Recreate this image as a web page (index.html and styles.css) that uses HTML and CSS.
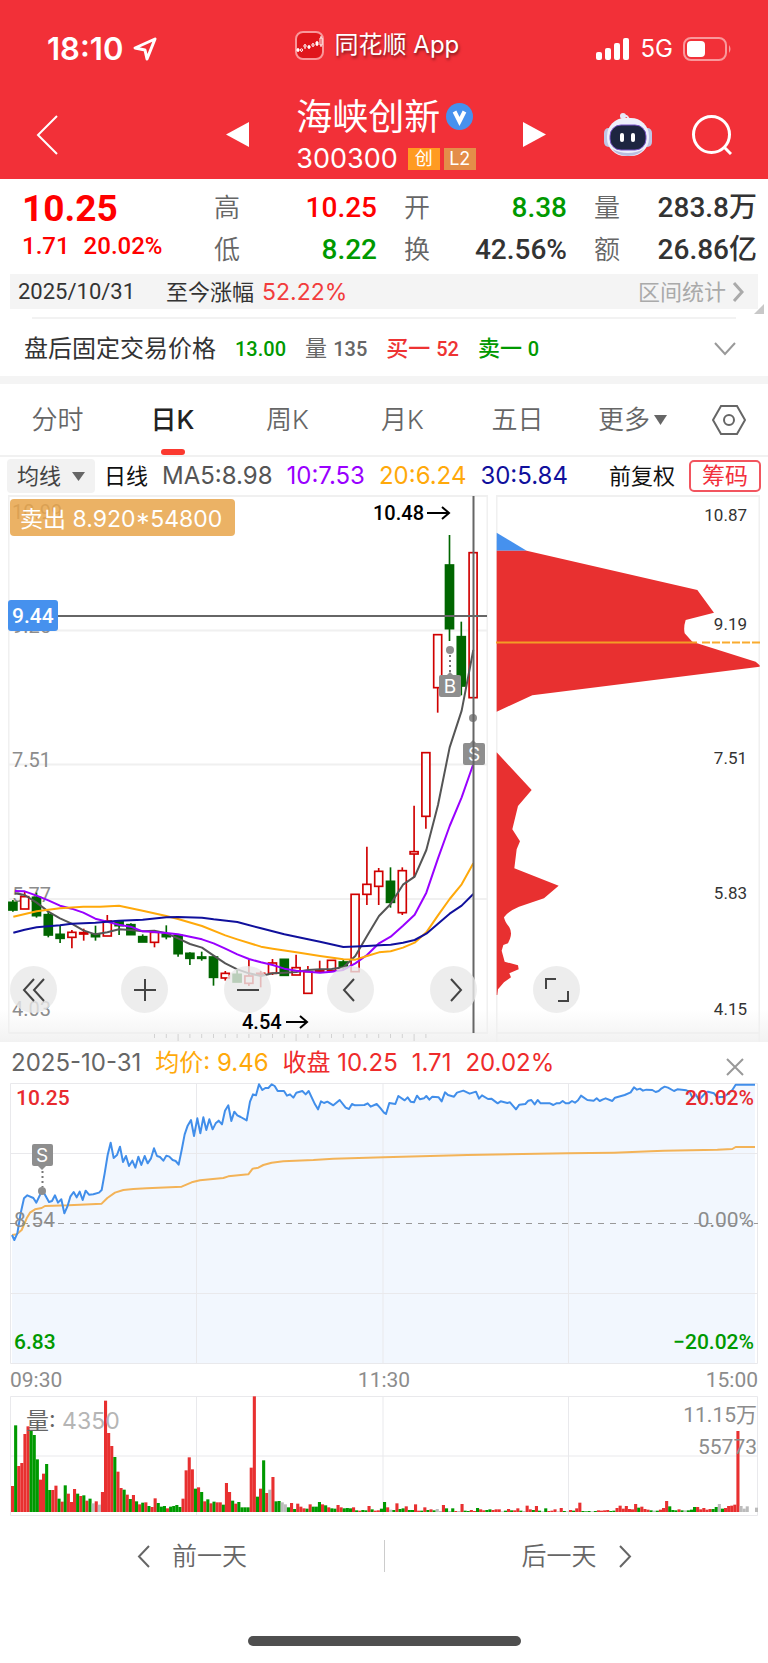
FILE: index.html
```html
<!DOCTYPE html>
<html lang="zh-CN">
<head>
    <meta charset="UTF-8">
    <meta name="viewport" content="width=device-width, initial-scale=1.0">
    <title>海峡创新 300300</title>
    <link rel="stylesheet" href="styles.css">
</head>
<body>
    <header class="top">
        <div class="status-bar">
            <div class="status-left">
                <span class="clock">18:10</span>
                <svg width="24" height="24" viewBox="0 0 24 24" fill="none" stroke="#fff" stroke-width="3" stroke-linejoin="round"><path d="M22 2 2 11l10 2 2 9z"/></svg>
            </div>
            <div class="status-app">
                <svg width="29" height="29" viewBox="0 0 29 29">
                    <rect x="1" y="1" width="27" height="27" rx="7" fill="#e0161c" stroke="#f9979a" stroke-width="2"/>
                    <g stroke="#fff" fill="none"><path d="M3 17v4M6.5 18v3M10 13v5M14 14v4M18 12v4M22 10v5M26 5v11" stroke-width="1"/><path d="M2 18h2v2H2zM13 15h2v2h-2zM21 11h2v3h-2z" fill="#fff"/><circle cx="6.500" cy="19" r="1.200" fill="#e0161c"/><circle cx="10" cy="15" r="1.200" fill="#e0161c"/><circle cx="18" cy="14" r="1.200" fill="#e0161c"/><path d="M25 7h2v7h-2z" fill="#e0161c"/></g>
                </svg>
                <span>同花顺 App</span>
            </div>
            <div class="status-right">
                <svg width="34" height="22" viewBox="0 0 34 22" fill="#fff"><rect y="14" width="6" height="8" rx="2"/><rect x="9" y="10" width="6" height="12" rx="2"/><rect x="18" y="5" width="6" height="17" rx="2"/><rect x="27" width="6" height="22" rx="2"/></svg>
                <span>5G</span>
                <svg width="49" height="24" viewBox="0 0 49 24"><rect x="1" y="1" width="42" height="22" rx="7" fill="none" stroke="#f9989b" stroke-width="2"/><rect x="4" y="4" width="18" height="16" rx="4" fill="#fff"/><path d="M46 8q3 4 0 8z" fill="#f9989b"/></svg>
            </div>
        </div>
        <div class="title-bar">
            <button class="icon-button" aria-label="返回">
                <svg width="24" height="40" viewBox="0 0 24 40" fill="none" stroke="#fff" stroke-width="2"><path d="M22 1 3 20l19 19"/></svg>
            </button>
            <div class="stock-switch">
                <button class="icon-button" aria-label="上一只"><svg width="23" height="25" viewBox="0 0 23 25"><path d="M0 12.500 23 0v25z" fill="#fff"/></svg></button>
                <div class="stock">
                    <h1>海峡创新
                        <svg width="27" height="27" viewBox="0 0 27 27"><circle cx="13.500" cy="13.500" r="13.500" fill="#4691ee"/><path d="M8.500 8.500 13.500 18.500 18.500 8.500" fill="none" stroke="#fff" stroke-width="4"/></svg>
                    </h1>
                    <div class="code">300300 <span class="badge">创</span><span class="badge level">L2</span></div>
                </div>
                <button class="icon-button" aria-label="下一只"><svg width="23" height="25" viewBox="0 0 23 25"><path d="M23 12.500 0 0v25z" fill="#fff"/></svg></button>
            </div>
            <div class="title-tools">
                <button class="icon-button" aria-label="智能助手">
                    <svg width="48" height="44" viewBox="0 0 48 44">
                        <path d="M25 7q-1-5-5-4" fill="none" stroke="#e6e8f7" stroke-width="2"/><circle cx="19" cy="3" r="3" fill="#e6e8f7"/>
                        <rect y="15" width="9" height="19" rx="5" fill="#bfc5e5"/><rect x="39" y="15" width="9" height="19" rx="5" fill="#bfc5e5"/>
                        <rect x="3" y="5" width="42" height="38" rx="18" fill="#eef0fb"/><path d="M8 36q16 8 32 0-6 7-16 7T8 36z" fill="#b9bde0"/>
                        <rect x="6" y="12" width="36" height="25" rx="11" fill="#1d2540" stroke="#7b55c7"/>
                        <rect x="16" y="20" width="4" height="9" rx="2" fill="#fff"/><rect x="27" y="20" width="4" height="9" rx="2" fill="#fff"/>
                    </svg>
                </button>
                <button class="icon-button" aria-label="搜索">
                    <svg width="40" height="40" viewBox="0 0 40 40" fill="none" stroke="#fff" stroke-width="3"><circle cx="19.500" cy="19.500" r="18"/><path d="m32 32 7 7"/></svg>
                </button>
            </div>
        </div>
    </header>

    <main>
        <section class="quote">
            <div class="last">
                <strong>10.25</strong>
                <p><span>1.71</span><span>20.02%</span></p>
            </div>
            <dl>
                <div><dt>高</dt><dd class="up">10.25</dd></div>
                <div><dt>低</dt><dd class="down">8.22</dd></div>
            </dl>
            <dl>
                <div><dt>开</dt><dd class="down">8.38</dd></div>
                <div><dt>换</dt><dd>42.56%</dd></div>
            </dl>
            <dl>
                <div><dt>量</dt><dd>283.8万</dd></div>
                <div><dt>额</dt><dd>26.86亿</dd></div>
            </dl>
        </section>

        <div class="range">
            <span class="range-date">2025/10/31</span>
            <span>至今涨幅</span>
            <span class="range-pct">52.22%</span>
            <a href="#" class="range-link">区间统计
                <svg width="12" height="20" viewBox="0 0 12 20" fill="none" stroke="#aaa" stroke-width="3"><path d="m2 1 8 9-8 9"/></svg>
            </a>
        </div>

        <div class="after-hours">
            <span>盘后固定交易价格</span>
            <b class="down">13.00</b>
            <span class="muted">量 <b>135</b></span>
            <span class="buy">买一 <b>52</b></span>
            <span class="down sell">卖一 <b>0</b></span>
            <button class="icon-button" aria-label="展开"><svg width="22" height="14" viewBox="0 0 22 14" fill="none" stroke="#999" stroke-width="2"><path d="m1 1 10 11L21 1"/></svg></button>
        </div>

        <nav class="tabs">
            <button>分时</button>
            <button class="active">日K</button>
            <button>周K</button>
            <button>月K</button>
            <button>五日</button>
            <button>更多<svg width="13" height="10" viewBox="0 0 13 10"><path d="M0 0h13L6.500 10z" fill="#666"/></svg></button>
            <button aria-label="设置"><svg width="34" height="30" viewBox="0 0 34 30" fill="none" stroke="#666" stroke-width="2"><path d="M9 1h16l8 14-8 14H9L1 15z"/><circle cx="17" cy="15" r="5"/></svg></button>
        </nav>

        <div class="ma-row">
            <label class="ma-pick">
                <select aria-label="指标"><option>均线</option></select>
                <svg width="13" height="9" viewBox="0 0 13 9"><path d="M0 0h13L6.500 9z" fill="#666"/></svg>
            </label>
            <span class="ma-name">日线</span>
            <span class="ma5">MA5:8.98</span>
            <span class="ma10">10:7.53</span>
            <span class="ma20">20:6.24</span>
            <span class="ma30">30:5.84</span>
            <button class="adjust">前复权</button>
            <button class="chips-button">筹码</button>
        </div>

        <section class="charts">
            <svg class="kline" viewBox="0 0 480 547">
                <path class="grid" d="M.5 538V1h479v537H.5M0 135.500h479M0 269.500h479M0 404h479"/>
                <path id="ticks" stroke="#d2d2d2"/>
                <g class="axis">
                    <text x="4" y="24">10.99</text>
                    <text x="4" y="138">9.25</text>
                    <text x="4" y="272">7.51</text>
                    <text x="4" y="407">5.77</text>
                    <text x="4" y="521">4.03</text>
                </g>
                <g id="candles" transform="translate(-8 285) scale(.33333)"></g>
                <g class="lines" id="averages" transform="translate(-8 285) scale(.33333)"></g>
                <g class="marker">
                    <circle cx="442" cy="155" r="4"/>
                    <path class="dots" d="M442 160v18"/>
                    <path d="m438 181 4-4 4 4z"/>
                    <rect x="431" y="180" width="22" height="22" rx="2"/>
                    <text x="442" y="198">B</text>
                    <circle cx="465" cy="223" r="4"/>
                    <path d="m461 249 4-4 4 4z"/>
                    <rect x="455" y="248" width="22" height="22" rx="2"/>
                    <text x="466" y="266">S</text>
                </g>
                <path d="M0 121h479M465.500 1v537" stroke="#666" stroke-width="2"/>
                <g class="extreme">
                    <text x="365" y="25">10.48</text>
                    <path d="M419 18h21m-6-6 7 6-7 6"/>
                    <text x="234" y="534">4.54</text>
                    <path d="M278 527h20m-6-6 7 6-7 6"/>
                </g>
                <rect x="2" y="4" width="225" height="37" rx="4" fill="#e8a54a" fill-opacity=".85"/>
                <text class="trade" x="12" y="32">卖出 8.920*54800</text>
                <rect x="0" y="105" width="50" height="31" rx="3" fill="#4691ee"/>
                <text class="cursor-price" x="4" y="128">9.44</text>
            </svg>
            <svg class="chips" viewBox="0 0 264 547">
                <path class="grid" d="M.5 547V1h263v546M0 538h264"/>
                <g transform="translate(-112 -5) scale(.33333)">
                    <path fill="#4691ee" d="M338 128l90 54h-90z"/>
                    <path fill="#e83030" d="M338 182H428L940 300 990 368 905 390Q898 412 902 430L925 455 1115 515 1127 526 1127 530 445 616 338 665z"/>
                    <path fill="#e83030" d="M338 787L443 900 402 948 385 1018 408 1054 398 1078 391 1135 524 1187 480 1225 405 1250Q370 1265 360 1282 362 1295 376 1312 385 1328 378 1346L372 1360 358 1365 353 1382 362 1415 402 1426 404 1438 376 1450 381 1462 360 1477 342 1498 340 1515H338z"/>
                </g>
                <path d="M0 147.500h201" stroke="#f39c26" stroke-width="2"/>
                <path d="M206 147.500h58" stroke="#f9ab2f" stroke-width="2" stroke-dasharray="8 2"/>
                <g class="chip-axis">
                    <text x="251" y="26">10.87</text>
                    <text x="251" y="135">9.19</text>
                    <text x="251" y="269">7.51</text>
                    <text x="251" y="404">5.83</text>
                    <text x="251" y="520">4.15</text>
                </g>
            </svg>
            <div class="chart-tools">
                <button aria-label="最左"><svg width="24" height="24" viewBox="0 0 24 24"><path d="M12 1 2 12l10 11M22 1 12 12l10 11"/></svg></button>
                <button aria-label="放大"><svg width="24" height="24" viewBox="0 0 24 24"><path d="M1 12h22M12 1v22"/></svg></button>
                <button aria-label="缩小"><svg width="24" height="24" viewBox="0 0 24 24"><path d="M1 12h22"/></svg></button>
                <button aria-label="左移"><svg width="24" height="24" viewBox="0 0 24 24"><path d="M15 1 5 12l10 11"/></svg></button>
                <button aria-label="右移"><svg width="24" height="24" viewBox="0 0 24 24"><path d="m9 1 10 11L9 23"/></svg></button>
                <button aria-label="全屏"><svg width="24" height="24" viewBox="0 0 24 24"><path d="M1 11V1h10M23 13v10H13"/></svg></button>
            </div>
        </section>

        <section class="day">
            <div class="day-head">
                <span>2025-10-31</span>
                <span class="avg">均价: 9.46</span>
                <span class="rise">收盘 10.25</span>
                <span class="rise">1.71</span>
                <span class="rise">20.02%</span>
                <button class="icon-button" aria-label="关闭"><svg width="18" height="18" viewBox="0 0 18 18" stroke="#999" stroke-width="2"><path d="m1 1 16 16M17 1 1 17"/></svg></button>
            </div>
            <svg class="plot" viewBox="0 0 748 281">
                <g transform="translate(-10 -43) scale(.33333)">
                    <path id="area" fill="#f2f7fe"/>
                </g>
                <path class="grid" d="M.5.500h747v280H.5zM0 70.500h748M0 210.500h748M186.500 0v281M373 0v281M558.500 0v281"/>
                <path d="M0 140.500h748" stroke="#999" stroke-dasharray="6 6"/>
                <g class="lines" transform="translate(-10 -43) scale(.33333)">
                    <polyline id="avgLine" stroke="#f3b358"/>
                    <polyline id="priceLine" stroke="#418eea"/>
                </g>
                <g class="marker">
                    <rect x="22" y="61" width="21" height="22" rx="2"/>
                    <path d="m28 83 4 4 4-4z"/>
                    <path class="dots" d="M32.500 88v16"/>
                    <circle cx="32" cy="108" r="4"/>
                    <text x="32" y="79">S</text>
                </g>
                <g class="labels">
                    <text class="hi" x="6" y="22">10.25</text>
                    <text x="4" y="144">8.54</text>
                    <text class="lo" x="4" y="266">6.83</text>
                    <text class="hi end" x="744" y="22">20.02%</text>
                    <text class="end" x="744" y="144">0.00%</text>
                    <text class="lo end" x="744" y="266">−20.02%</text>
                </g>
            </svg>
            <div class="times"><span>09:30</span><span>11:30</span><span>15:00</span></div>
            <svg class="plot" viewBox="0 0 748 120">
                <path class="grid" d="M.5.500h747v119H.5zM0 60h748M186.500 0v120M373 0v120M558.500 0v120"/>
                <g id="volume" transform="translate(-10 -66) scale(.33333)"></g>
                <g class="labels">
                    <text class="vol" x="16" y="33">量: <tspan fill="#b5b5b5">4350</tspan></text>
                    <text class="end" x="747" y="26">11.15万</text>
                    <text class="end" x="747" y="58">55773</text>
                </g>
            </svg>
        </section>

        <div class="day-nav">
            <button><svg width="13" height="23" viewBox="0 0 13 23"><path d="M12 1 2 11.500 12 22"/></svg>前一天</button>
            <button>后一天<svg width="13" height="23" viewBox="0 0 13 23"><path d="m1 1 10 10.500L1 22"/></svg></button>
        </div>
    </main>
    <div class="home-indicator"></div>
    <script src="script.js"></script>
</body>
</html>
```
FILE: styles.css
```css
* {
    box-sizing: border-box;
}

body {
    margin: 0;
    background: #fff;
    color: #333;
    font-family: Inter, "Noto Sans CJK SC", sans-serif;
    font-size: 22px;
    line-height: 32px;
}

button,
select {
    border: 0;
    padding: 0;
    background: none;
    color: inherit;
    font: inherit;
}

svg {
    display: block;
    flex-shrink: 0;
}

.up { color: #f00; }
.down { color: #090; }

.icon-button {
    display: flex;
}

/* header */
.top {
    height: 179px;
    background: #f23038;
    color: #fff;
}

.status-bar {
    display: flex;
    justify-content: space-between;
    align-items: center;
    height: 90px;
    padding: 8px 36px 0 47px;
}

.status-left,
.status-app,
.status-right {
    display: flex;
    align-items: center;
    gap: 10px;
}

.clock {
    font-size: 31px;
    font-weight: 600;
}

.status-app {
    gap: 11px;
    padding-bottom: 8px;
    font-size: 24px;
    text-shadow: 1px 2px 3px rgba(0, 0, 0, .5);
}

.status-right {
    font-size: 24px;
}

.title-bar {
    display: grid;
    grid-template-columns: 191fr 320fr 186fr;
    align-items: center;
    height: 89px;
    padding: 0 36px 0 35px;
}

.stock-switch {
    display: flex;
    align-items: center;
    justify-content: space-between;
}

.stock h1 {
    display: flex;
    align-items: center;
    gap: 6px;
    margin: 0;
    font-size: 36px;
    font-weight: 400;
    line-height: 48px;
}

.code {
    display: flex;
    align-items: center;
    gap: 4px;
    font-size: 27px;
    line-height: 36px;
}

.badge {
    width: 32px;
    margin-left: 6px;
    background: #ff9b21;
    font-size: 18px;
    line-height: 22px;
    text-align: center;
}

.badge.level {
    margin-left: 0;
    background: #e48d49;
}

.title-tools {
    display: flex;
    align-items: center;
    justify-content: flex-end;
    gap: 40px;
}

/* quote */
.quote {
    display: grid;
    grid-template-columns: 1fr 163px 163px 163px;
    column-gap: 27px;
    height: 95px;
    padding: 8px 11px 0 22px;
    font-family: Roboto, "Noto Sans CJK SC", sans-serif;
    font-weight: 500;
}

.last {
    color: #f00;
}

.last strong {
    display: block;
    font-size: 37px;
    font-weight: 700;
    line-height: 44px;
}

.last p {
    display: flex;
    gap: 14px;
    margin: 0;
    font-size: 24px;
    line-height: 30px;
}

.quote dl {
    margin: 0;
}

.quote dl div {
    display: flex;
    justify-content: space-between;
    align-items: center;
    height: 42px;
}

.quote dt {
    color: #666;
    font-size: 26px;
    font-weight: 350;
}

.quote dd {
    margin: 0;
    font-size: 28px;
    white-space: nowrap;
}

.range {
    position: relative;
    display: flex;
    align-items: center;
    height: 35px;
    margin: 0 10px;
    padding: 0 14px 0 8px;
    background: #f4f4f4;
}

.range::after {
    position: absolute;
    right: -6px;
    bottom: -5px;
    border: 5px solid #c8c8c8;
    border-top-color: transparent;
    border-left-color: transparent;
    content: "";
}

.range-date {
    margin-right: 31px;
    font-family: Roboto, sans-serif;
}

.range-pct {
    margin-left: 8px;
    color: #f23c3c;
    font-size: 23px;
}

.range-link {
    display: flex;
    align-items: center;
    gap: 6px;
    margin-left: auto;
    color: #aaa;
    text-decoration: none;
}

.after-hours {
    position: relative;
    display: flex;
    align-items: center;
    gap: 19px;
    height: 75px;
    padding: 12px 32px 0 24px;
    border-bottom: 8px solid #f4f4f4;
    font-size: 24px;
}

.after-hours::before {
    position: absolute;
    top: 8px;
    right: 32px;
    left: 32px;
    height: 2px;
    background: #f2f2f2;
    content: "";
}

.after-hours b {
    font-family: Roboto, sans-serif;
    font-size: 20px;
    font-weight: 500;
}

.muted { color: #666; }
.buy { color: #e33; }

.buy,
.sell {
    font-weight: 500;
}

.after-hours .muted,
.after-hours .buy,
.after-hours .sell {
    font-size: 22px;
}

.after-hours .icon-button {
    margin-left: auto;
}

/* tabs */
.tabs {
    display: grid;
    grid-template-columns: repeat(6, 115fr) 78fr;
    height: 73px;
    border-bottom: 2px solid #f1f1f1;
    color: #666;
    font-size: 26px;
    font-weight: 350;
}

.tabs button {
    position: relative;
    display: flex;
    align-items: center;
    justify-content: center;
    gap: 4px;
}

.tabs .active {
    color: #222;
    font-weight: 500;
}

.tabs .active::after {
    position: absolute;
    bottom: 0;
    width: 24px;
    height: 6px;
    border-radius: 3px;
    background: #fb392f;
    content: "";
}

.ma-row {
    display: flex;
    align-items: center;
    gap: 14px;
    height: 38px;
    padding: 0 7px;
    font-size: 24px;
    white-space: nowrap;
}

.ma-pick {
    display: flex;
    align-items: center;
    gap: 10px;
    height: 34px;
    margin-right: -5px;
    padding: 0 10px;
    border-radius: 4px;
    background: #f2f2f2;
    font-size: 22px;
}

.ma-pick select {
    appearance: none;
    color: #444;
}

.ma-name,
.adjust {
    color: #111;
    font-size: 22px;
}

.ma5 { color: #555; }
.ma10 { color: #90f; }
.ma20 { color: #ffa90a; }
.ma30 { color: #10109c; }

.adjust {
    margin-left: auto;
}

.chips-button {
    height: 32px;
    padding: 0 11px;
    border: 2px solid #f2555f;
    border-radius: 5px;
    color: #f2303c;
    font-size: 23px;
    line-height: 28px;
}

/* daily chart and chip distribution */
.charts {
    position: relative;
    display: grid;
    grid-template-columns: 480fr 264fr;
    column-gap: 8px;
    padding: 0 8px;
    background: linear-gradient(#fff 94%, #f2f2f2);
    font-family: Roboto, sans-serif;
}

.kline,
.chips,
.plot {
    width: 100%;
}

.grid {
    fill: none;
    stroke: #e9e9ec;
}

.charts .grid {
    stroke-width: 2;
    stroke: #f0f0f0;
}

.axis {
    fill: #8c8c8c;
    font-size: 20px;
}

.lines {
    fill: none;
    stroke-width: 6;
    stroke-linejoin: round;
}

.rise-candle {
    fill: #fff;
    stroke: #d00000;
    stroke-width: 5;
}

.fall-candle {
    fill: #006600;
    stroke: #006600;
    stroke-width: 5;
}

.marker {
    fill: #8e8e8e;
}

.marker text {
    fill: #fff;
    font-family: Inter, sans-serif;
    font-size: 19px;
    text-anchor: middle;
}

.marker .dots {
    stroke: #777;
    stroke-width: 2;
    stroke-dasharray: 2 3;
}

.extreme {
    fill: #000;
    font-size: 20px;
    font-weight: 500;
}

.extreme path {
    fill: none;
    stroke: #000;
    stroke-width: 2;
}

.trade {
    fill: #fff;
    font-family: Inter, "Noto Sans CJK SC", sans-serif;
    font-size: 23px;
}

.cursor-price {
    fill: #fff;
    font-size: 21px;
    font-weight: 500;
}

.chip-axis {
    fill: #333;
    font-size: 17px;
    text-anchor: end;
}

.chart-tools {
    position: absolute;
    bottom: 29px;
    left: 10px;
    display: flex;
    gap: 56px;
}

.chart-tools button {
    display: flex;
    align-items: center;
    justify-content: center;
    width: 47px;
    height: 47px;
    border-radius: 50%;
    background: rgba(232, 232, 232, .8);
}

.chart-tools button:first-child {
    margin-right: 8px;
}

.chart-tools svg {
    fill: none;
    stroke: #444;
    stroke-width: 2;
}

/* single day panel */
.day {
    padding: 0 10px;
}

.day-head {
    display: flex;
    align-items: center;
    gap: 14px;
    height: 41px;
    padding: 0 14px 0 1px;
    color: #666;
    font-size: 24px;
}

.day-head .icon-button {
    margin-left: auto;
    padding-top: 8px;
}

.avg { color: #ffa90a; }
.rise { color: #ee2b2b; }

.labels {
    fill: #8c8c8c;
    font-family: Roboto, "Noto Sans CJK SC", sans-serif;
    font-size: 21px;
}

.labels .hi {
    fill: #e82a2f;
    font-weight: 500;
}

.labels .lo {
    fill: #090;
    font-weight: 500;
}

.labels .end {
    text-anchor: end;
}

.labels .vol {
    fill: #666;
    font-family: Inter, "Noto Sans CJK SC", sans-serif;
    font-size: 23px;
}

.times {
    display: flex;
    justify-content: space-between;
    color: #8c8c8c;
    font-family: Roboto, sans-serif;
    font-size: 21px;
    line-height: 32px;
}

.day-nav {
    display: grid;
    grid-template-columns: 1fr 1fr;
    margin-top: 24px;
    color: #666;
    font-size: 25px;
    font-weight: 350;
}

.day-nav button {
    display: flex;
    align-items: center;
    justify-content: center;
    gap: 22px;
    height: 32px;
}

.day-nav button + button {
    border-left: 1px solid #ccc;
}

.day-nav svg {
    fill: none;
    stroke: #666;
    stroke-width: 2;
}

.home-indicator {
    width: 273px;
    height: 10px;
    margin: 64px auto 17px;
    border-radius: 5px;
    background: #4f4f4f;
}
```
FILE: script.js
```js
// colour, body top, body bottom, high, low
const candles = [
    ['G', 367, 390, 360, 395], ['R', 350, 387, 336, 387], ['G', 352, 407, 338, 413], ['G', 404, 465, 396, 472],
    ['G', 463, 475, 436, 489], ['R', 457, 472, 450, 505], ['R', 458, 462, 446, 482], ['G', 463, 470, 437, 482],
    ['R', 423, 468, 405, 468], ['G', 424, 437, 420, 465], ['G', 434, 464, 430, 464], ['G', 470, 486, 463, 486],
    ['R', 457, 487, 457, 502], ['G', 463, 470, 436, 478], ['G', 466, 521, 466, 530], ['G', 520, 535, 517, 555],
    ['G', 531, 535, 515, 542], ['G', 531, 592, 525, 617], ['R', 580, 594, 573, 602], ['G', 583, 606, 570, 606],
    ['R', 588, 610, 540, 618], ['R', 580, 584, 573, 622], ['R', 549, 580, 537, 585], ['G', 538, 586, 538, 586],
    ['R', 563, 585, 524, 585], ['R', 575, 640, 558, 640], ['R', 571, 574, 542, 575], ['R', 541, 572, 541, 572],
    ['G', 546, 562, 540, 570], ['R', 343, 575, 343, 575], ['R', 313, 343, 200, 375], ['R', 274, 319, 264, 375],
    ['G', 304, 367, 262, 383], ['R', 272, 398, 262, 405], ['R', 215, 222, 77, 293], ['R', -82, 109, -82, 146],
    ['R', -436, -277, -436, -202], ['G', -645, -454, -735, -417], ['G', -430, -282, -475, -254], ['R', -682, -247, -682, -247]
];

const averages = {
    '#555': '45,340 74,345 110,368 145,395 180,415 215,431 250,451 286,463 322,457 357,448 392,450 428,454 463,452 499,460 534,475 570,492 606,503 641,527 676,550 712,568 747,580 783,588 818,580 853,578 889,576 924,570 960,568 995,567 1030,562 1066,528 1101,468 1137,408 1172,372 1209,314 1244,290 1279,210 1314,75 1349,-98 1385,-208 1420,-390',
    '#90f': '45,333 74,334 110,347 145,361 180,377 215,386 250,398 286,416 322,425 357,434 392,440 428,454 463,456 499,459 534,463 570,470 606,478 641,490 676,506 712,523 747,537 783,547 818,555 853,566 889,572 924,575 960,578 995,575 1030,570 1066,550 1101,525 1137,490 1172,470 1209,437 1244,404 1279,338 1314,235 1349,138 1385,52 1420,-48',
    '#ffa90a': '40,410 110,394 180,385 250,380 300,380 357,377 428,392 499,408 534,417 606,438 676,466 712,478 783,500 818,506 889,517 960,528 1030,538 1066,539 1101,528 1137,517 1172,514 1209,503 1244,488 1279,457 1314,406 1349,357 1385,313 1420,250',
    '#10109c': '40,458 74,449 110,442 180,436 215,431 286,428 357,422 428,419 499,412 534,411 606,413 641,418 712,426 783,445 853,463 924,478 960,485 1030,501 1101,498 1152,495 1172,494 1209,488 1244,480 1279,461 1314,431 1349,401 1385,377 1420,342'
};

const price = '36,585 43,600 52,580 62,520 72,475 82,466 100,474 109,488 127,450 147,486 156,483 165,466 174,488 184,478 193,520 202,500 211,470 221,456 230,472 239,455 248,480 257,452 267,464 280,463 297,458 305,450 314,400 323,345 332,308 341,354 351,345 360,320 369,366 378,348 387,378 397,362 406,383 415,350 424,375 434,348 443,370 453,355 462,325 471,348 480,351 490,362 499,347 508,350 518,360 527,363 536,374 545,330 554,283 563,257 573,240 582,288 592,235 601,280 610,232 619,270 628,238 638,268 647,250 656,242 666,253 675,212 685,196 694,243 703,215 712,226 722,231 740,241 750,185 759,163 768,166 777,133 787,150 796,144 805,144 815,133 824,138 833,153 852,153 861,167 870,163 880,173 889,158 907,153 917,163 926,153 945,193 954,208 963,184 972,189 982,185 1000,196 1019,180 1037,203 1047,207 1056,192 1065,196 1093,195 1103,190 1112,200 1130,192 1140,203 1152,218 1158,222 1168,189 1186,192 1195,168 1214,181 1223,172 1232,185 1242,187 1251,167 1260,178 1272,175 1279,168 1288,179 1297,170 1316,172 1325,184 1335,157 1344,165 1362,170 1371,158 1390,152 1409,161 1428,155 1437,176 1446,166 1464,177 1474,176 1493,190 1502,184 1522,189 1530,187 1548,208 1558,194 1576,192 1585,182 1594,180 1604,193 1613,180 1622,190 1650,190 1660,195 1669,190 1679,190 1688,183 1697,190 1706,190 1716,183 1725,188 1734,181 1743,167 1762,180 1781,182 1790,175 1799,183 1809,178 1817,175 1837,183 1845,173 1874,165 1892,157 1902,142 1911,149 1920,146 1929,152 1939,149 1957,150 1967,156 1976,153 1985,145 1994,140 2004,143 2022,153 2032,148 2059,151 2069,155 2078,175 2087,163 2097,180 2115,160 2124,155 2142,160 2152,172 2171,170 2182,163 2197,150 2207,134 2265,134';

const average = '36,585 50,583 65,570 80,535 90,518 105,508 125,504 135,498 160,497 205,496 240,494 305,491 322,474 345,458 370,450 400,447 440,445 545,440 575,427 600,421 670,414 685,409 745,403 758,386 775,383 790,375 815,368 850,364 940,360 1000,356 1152,352 1402,345 1702,340 1842,338 1952,334 1992,332 2152,329 2197,327 2207,321 2265,321';

// one entry per minute: R up, G down, N flat
const volume = `R468 G286 R408 R399 R312 R289 G302 G315 G388 R449 R431 G402 G480 R480 R467 G506 R515 G466 R491 R516
R477 G491 R498 G496 R512 G506 N520 R514 N524 R486 R212 R309 R348 G381 R425 R474 G479 R494 G507 R495
G514 R523 G518 R517 G528 R531 R505 G519 G530 G528 R535 G530 G528 G525 G531 R506 R421 R382 R418 G476
R472 G486 R514 G508 R520 G515 R517 R517 G524 R459 R486 G512 R521 G516 G532 G532 G532 R413 R199 G500
R476 G391 R489 N479 R441 G514 G513 N517 N523 G532 R519 G537 R521 R530 R535 G536 R523 G530 G530 G516
R523 G526 R532 G535 G536 R525 R532 G535 G534 G535 R532 G541 R542 G540 G541 R528 G538 R542 R541 G536
G516 R532 N539 G540 R520 G537 G535 R529 G540 G540 R523 R542 G542 R532 G540 R538 G541 N537 N543 R525
G535 N543 G535 R543 N543 R522 G542 G543 R540 R543 G534 R538 R541 G540 G538 R540 R538 R538 N544 G542
R537 G541 R541 R535 G542 N543 R527 R538 G540 R528 G542 N544 G535 R543 R542 R538 N544 R534 G543 N544
R540 G542 R535 R518 G543 G544 G543 N544 G543 R541 R542 R541 R540 G543 G542 R534 R527 R536 R528 R537
R538 R522 G533 R530 R537 R539 G541 N542 G542 R539 R534 R513 G529 G540 G541 R538 G541 N541 G541 G539
G531 R531 R538 R534 R539 R537 G537 G531 N522 G536 R534 R528 R527 R524 R303 N528 N536 N529 N546 N546 N533`;

const byId = id => document.getElementById(id);

function drawCandles() {
    byId('candles').innerHTML = candles.map(([color, top, bottom, high, low], i) => {
        const x = 38.7 + i * 35.4;
        const name = color === 'R' ? 'rise-candle' : 'fall-candle';
        const height = Math.max(bottom - top, 2);
        return `<g class="${name}"><path d="M${x} ${high}V${low}"/><rect x="${x - 12}" y="${top}" width="24" height="${height}"/></g>`;
    }).join('');

    byId('averages').innerHTML = Object.entries(averages)
        .map(([color, points]) => `<polyline stroke="${color}" points="${points}"/>`).join('');

    let ticks = '';
    for (let i = 0; i < 24; i++) {
        ticks += `M${146.5 + i * 11.8} 539v${i % 10 === 2 ? 7 : 4}`;
    }
    byId('ticks').setAttribute('d', ticks);
}

function drawDay() {
    byId('priceLine').setAttribute('points', price);
    byId('avgLine').setAttribute('points', average);
    byId('area').setAttribute('d', `M${price} V972 H36z`);
}

function drawVolume() {
    const colors = { R: '#e83030', G: '#090', N: '#bbb' };
    byId('volume').innerHTML = volume.split(/\s+/).map((bar, i) => {
        const top = Number(bar.slice(1));
        return `<rect x="${33 + i * 9.3}" y="${top}" width="9.3" height="${546 - top}" fill="${colors[bar[0]]}"/>`;
    }).join('');
}

drawCandles();
drawDay();
drawVolume();
```
